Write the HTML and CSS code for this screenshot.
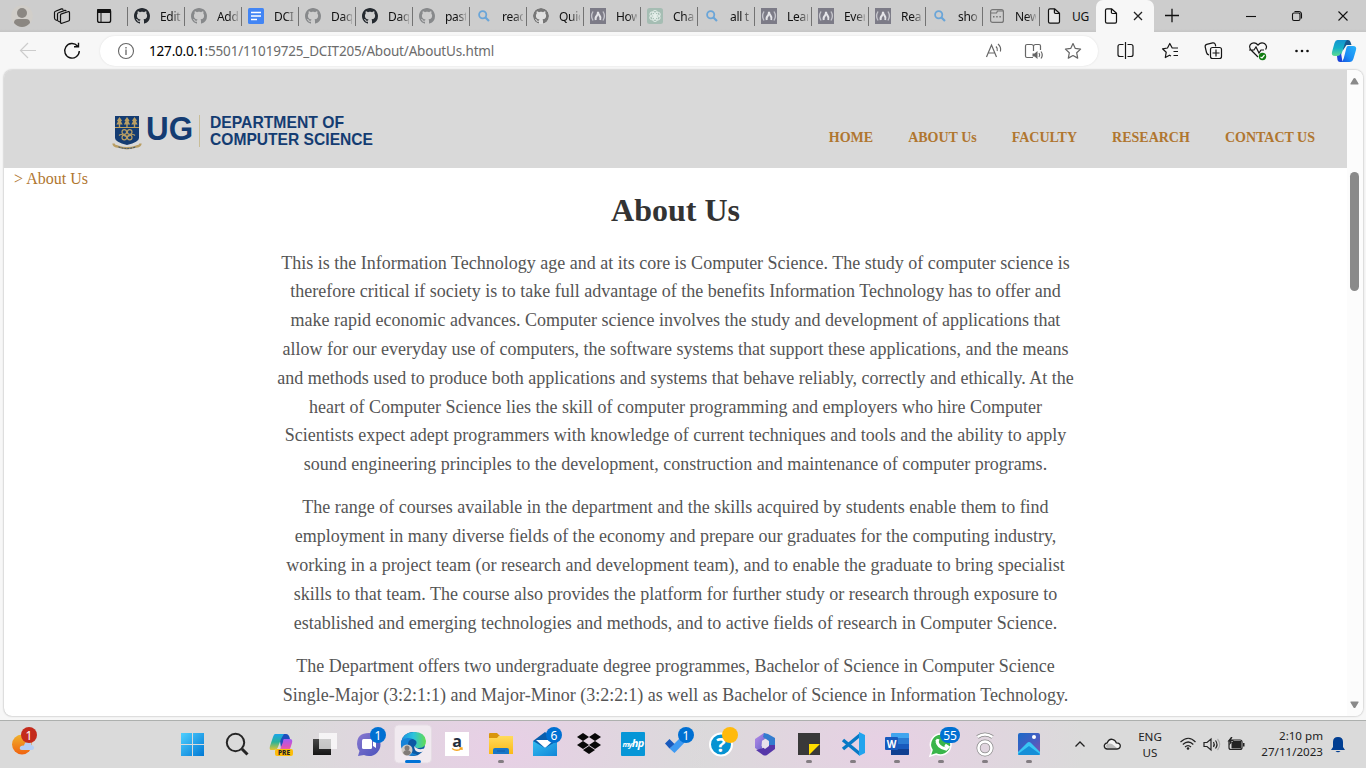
FILE: index.html
```html
<!DOCTYPE html>
<html lang="en">
<head>
<meta charset="utf-8">
<title>About Us</title>
<link rel="stylesheet" href="styles.css">
</head>
<body>
<svg class="defs" width="0" height="0" aria-hidden="true">
  <defs>
    <linearGradient id="win" x1="0" y1="0" x2="1" y2="1"><stop offset="0" stop-color="#4fd0ff"/><stop offset="1" stop-color="#0078d4"/></linearGradient>
    <linearGradient id="teal" x1="0" y1="0" x2="0" y2="1"><stop offset="0" stop-color="#1593cf"/><stop offset=".5" stop-color="#14b0c8"/><stop offset="1" stop-color="#5fdc90"/></linearGradient>
    <linearGradient id="blue" x1="1" y1="0" x2="0" y2="1"><stop offset="0" stop-color="#28b3fa"/><stop offset=".6" stop-color="#1a8cf5"/><stop offset="1" stop-color="#1552e0"/></linearGradient>
    <linearGradient id="rain" x1="0" y1="0" x2="0" y2="1"><stop offset="0" stop-color="#1ba5e8"/><stop offset=".5" stop-color="#29b39a"/><stop offset="1" stop-color="#e5c42f"/></linearGradient>
    <linearGradient id="pink" x1="0" y1="0" x2="0" y2="1"><stop offset="0" stop-color="#a15cf5"/><stop offset=".6" stop-color="#e053b8"/><stop offset="1" stop-color="#f77b8b"/></linearGradient>
    <linearGradient id="sun" x1="0" y1="0" x2="0" y2="1"><stop offset="0" stop-color="#f0b32e"/><stop offset="1" stop-color="#f0620f"/></linearGradient>
    <linearGradient id="dark" x1="0" y1="0" x2="0" y2="1"><stop offset="0" stop-color="#484848"/><stop offset="1" stop-color="#151515"/></linearGradient>
    <linearGradient id="chat" x1="0" y1="0" x2="1" y2="1"><stop offset="0" stop-color="#8878d0"/><stop offset="1" stop-color="#4b53bc"/></linearGradient>
    <linearGradient id="edge" x1="0" y1="0" x2="1" y2="0"><stop offset="0" stop-color="#1a8fe0"/><stop offset=".5" stop-color="#2cc3dc"/><stop offset="1" stop-color="#64dc50"/></linearGradient>
    <linearGradient id="fold" x1="0" y1="0" x2="0" y2="1"><stop offset="0" stop-color="#ffdb5c"/><stop offset="1" stop-color="#fbb917"/></linearGradient>
    <linearGradient id="mail" x1="0" y1="0" x2="1" y2="1"><stop offset="0" stop-color="#35bdf0"/><stop offset="1" stop-color="#1186d8"/></linearGradient>
    <linearGradient id="office" x1="0" y1="0" x2="1" y2="1"><stop offset="0" stop-color="#b98be8"/><stop offset="1" stop-color="#5a5fc8"/></linearGradient>
    <linearGradient id="photo" x1="0" y1="0" x2="1" y2="1"><stop offset="0" stop-color="#1a69c8"/><stop offset=".6" stop-color="#4a5cc0"/><stop offset="1" stop-color="#8750a8"/></linearGradient>
    <symbol id="gh" viewBox="0 0 16 16"><path fill="currentColor" d="M8 0C3.58 0 0 3.58 0 8c0 3.54 2.29 6.53 5.47 7.59.4.07.55-.17.55-.38 0-.19-.01-.82-.01-1.49-2.01.37-2.53-.49-2.69-.94-.09-.23-.48-.94-.82-1.13-.28-.15-.68-.52-.01-.53.63-.01 1.08.58 1.23.82.72 1.21 1.87.87 2.33.66.07-.52.28-.87.51-1.07-1.78-.2-3.64-.89-3.64-3.95 0-.87.31-1.59.82-2.15-.08-.2-.36-1.02.08-2.12 0 0 .67-.21 2.2.82.64-.18 1.32-.27 2-.27s1.36.09 2 .27c1.53-1.04 2.2-.82 2.2-.82.44 1.1.16 1.92.08 2.12.51.56.82 1.27.82 2.15 0 3.07-1.87 3.75-3.65 3.95.29.25.54.73.54 1.48 0 1.07-.01 1.93-.01 2.2 0 .21.15.46.55.38A8.01 8.01 0 0 0 16 8c0-4.42-3.58-8-8-8z"/></symbol>
    <symbol id="mag" viewBox="0 0 16 16"><g fill="none" stroke="#6aa5d8" stroke-width="1.8"><circle cx="6.700" cy="6.700" r="3.600"/><path d="M9.500 9.500L13 13" stroke-width="2.200"/></g></symbol>
    <symbol id="fcc" viewBox="0 0 16 16"><path fill="#7c7b87" d="M0 0h16v16H0z"/><path fill="none" stroke="#c4c4cb" stroke-width="1.400" d="M3 3.500Q.2 8 3 12.500M13 3.500Q15.800 8 13 12.500"/><path fill="none" stroke="#e4e4e8" stroke-width="2" d="M5.800 12Q5 9.500 7 7.500 8 6 8 3.800 8.200 6 9.500 7.500 11.200 9.500 10.200 12"/></symbol>
    <symbol id="doc" viewBox="0 0 16 16"><path fill="#f8f8f8" fill-opacity=".6" stroke="#111" stroke-width="1.200" stroke-linejoin="round" d="M4 .8h4.500l5 4.500v8.500q0 1.400-1.400 1.400H4Q2.500 15.200 2.500 13.800V2.200Q2.500.8 4 .8M8.400.8v3.500q0 1.200 1.200 1.200h3.900"/></symbol>
    <symbol id="gdoc" viewBox="0 0 16 16"><rect width="16" height="16" rx="1.500" fill="#4285f4"/><path stroke="#fff" stroke-width="1.500" d="M3 4.500h10M3 8h10M3 11.500h6"/></symbol>
    <symbol id="gpt" viewBox="0 0 16 16"><rect width="16" height="16" rx="2.500" fill="#a5bdb3"/><g fill="none" stroke="#e6efeb" stroke-width=".9"><ellipse cx="8" cy="5.600" rx="2.500" ry="3.200"/><ellipse cx="8" cy="5.600" rx="2.500" ry="3.200" transform="rotate(60 8 8)"/><ellipse cx="8" cy="5.600" rx="2.500" ry="3.200" transform="rotate(120 8 8)"/><ellipse cx="8" cy="5.600" rx="2.500" ry="3.200" transform="rotate(180 8 8)"/><ellipse cx="8" cy="5.600" rx="2.500" ry="3.200" transform="rotate(240 8 8)"/><ellipse cx="8" cy="5.600" rx="2.500" ry="3.200" transform="rotate(300 8 8)"/></g></symbol>
    <symbol id="newt" viewBox="0 0 16 16"><g fill="none" stroke="#757575" stroke-width="1.200"><rect x="1.600" y="1.600" width="12.800" height="12.800" rx="2"/><path d="M2 5h5.500l1-2h5.500"/></g><path fill="#757575" d="M4 8h1.500v1.500H4zM7.200 8h1.500v1.500H7.200zM10.400 8h1.500v1.500h-1.500z"/></symbol>
  </defs>
</svg>

<div class="tabstrip">
  <svg class="strip-icons" width="127" height="32">
    <circle cx="22" cy="16" r="10.800" fill="#d1cec9"/><circle cx="22" cy="13" r="5" fill="#8b8782"/><path fill="#8b8782" d="M14 23q0-4 4-4h8q4 0 4 4-3.500 4-8 4t-8-4z"/>
    <g fill="#cdcdcd" stroke="#111" stroke-width="1.200" stroke-linejoin="round"><path d="M57 20.500l-1.500-.7q-1-.5-1-2V12.500q0-1 1-1.300l6-2.300q1.200-.3 1.700.8"/><path d="M60 22l-1.500-.7q-1-.5-1-1.600V14q0-1 1-1.300l6.300-2.300q1-.2 1.400.8"/><path d="M60.500 15.200q0-1 1-1.300l6.500-2.200q1.500-.3 1.500 1v7q0 1-1 1.300l-6.500 2.200q-1.500.4-1.500-1z"/></g>
    <rect x="97.600" y="9.600" width="13" height="12.800" rx="2" fill="none" stroke="#111" stroke-width="1.300"/><path d="M97 9.500q0-.5 1-.5h12q1 0 1 1v3H97zM100.500 13h1v9h-1z" fill="#111"/>
  </svg>
  <div class="tab"><svg class="fav"><use href="#gh"/></svg><span>Edit</span></div>
  <div class="tab"><svg class="fav dim"><use href="#gh"/></svg><span>Add</span></div>
  <div class="tab"><svg class="fav"><use href="#gdoc"/></svg><span>DCI</span></div>
  <div class="tab"><svg class="fav dim"><use href="#gh"/></svg><span>Daq</span></div>
  <div class="tab"><svg class="fav"><use href="#gh"/></svg><span>Daq</span></div>
  <div class="tab"><svg class="fav dim"><use href="#gh"/></svg><span>past</span></div>
  <div class="tab"><svg class="fav"><use href="#mag"/></svg><span>reac</span></div>
  <div class="tab"><svg class="fav light"><use href="#gh"/></svg><span>Quic</span></div>
  <div class="tab"><svg class="fav"><use href="#fcc"/></svg><span>How</span></div>
  <div class="tab"><svg class="fav"><use href="#gpt"/></svg><span>Cha</span></div>
  <div class="tab"><svg class="fav"><use href="#mag"/></svg><span>all t</span></div>
  <div class="tab"><svg class="fav"><use href="#fcc"/></svg><span>Lear</span></div>
  <div class="tab"><svg class="fav"><use href="#fcc"/></svg><span>Ever</span></div>
  <div class="tab"><svg class="fav"><use href="#fcc"/></svg><span>Rea</span></div>
  <div class="tab"><svg class="fav"><use href="#mag"/></svg><span>sho</span></div>
  <div class="tab"><svg class="fav"><use href="#newt"/></svg><span>New</span></div>
  <div class="tab"><svg class="fav"><use href="#doc"/></svg><span class="full">UG</span></div>
  <div class="tab active"><svg class="fav"><use href="#doc"/></svg><svg width="10" height="10" stroke="#222" stroke-width="1.300"><path d="M1 1l8 8M9 1L1 9"/></svg></div>
  <svg class="window-controls" width="212" height="32" fill="none" stroke="#111" stroke-width="1.100">
    <path stroke-width="1.300" d="M11 15.500h14M18 8.800v13.500"/><path d="M92 16.500h10"/><rect x="138.500" y="13" width="7.500" height="7.500" rx="1.500"/><path d="M140.500 11.500h4q3 0 3 3v4"/><path d="M184.500 11.500l9 9M193.500 11.500l-9 9"/>
  </svg>
</div>

<div class="toolbar">
  <svg width="100" height="38" fill="none" stroke-width="1.200"><path stroke="#ccc" d="M36 18.500H20.500M28 11l-7.500 7.500L28 26"/><path stroke="#111" stroke-width="1.400" d="M77.500 14A7.300 7.300 0 1 0 79.300 19M78.500 10.800v4h-4.500"/></svg>
  <div class="address">
    <svg width="49" height="30" fill="none" stroke="#666"><circle cx="26" cy="15" r="7.500" stroke-width="1.100"/><path stroke-width="1.300" d="M26 13.500v5.500M26 11v1.500"/></svg>
    <div class="url"><b>127.0.0.1</b>:5501/11019725_DCIT205/About/AboutUs.html</div>
    <svg class="address-icons" width="122" height="30" fill="none" stroke="#666" stroke-width="1.200">
      <path d="M10.500 21L15.500 9l5 12M12.200 17h6.500M20 10.500q2 2 1.200 4.500M22 8q3.500 3 2.400 7.500"/>
      <path d="M57 21.500h-6q-1.500 0-1.500-1.500V10q0-1.500 1.500-1.500h4.500q1.500 0 2 1.500v5M57.500 10q.5-1.500 2-1.500H63q1.500 0 1.500 1.500v4"/><path fill="#666" stroke="none" d="M56.500 17.500h2l3-2.500v8l-3-2.500h-2z"/><path d="M63 17q1.500 2 0 4M65 15.500q2.500 3.500 0 7"/>
      <path stroke-linejoin="round" d="M97 7.500l2.300 4.900 5.300.7-3.900 3.700 1 5.300-4.700-2.600-4.700 2.600 1-5.300-3.900-3.700 5.300-.7z"/>
    </svg>
  </div>
  <svg width="268" height="38" fill="none" stroke="#161616" stroke-width="1.200">
    <path d="M25.500 12.500H22q-2 0-2 2v8q0 2 2 2h3.500M29.500 12.500H33q2 0 2 2v8q0 2-2 2h-3.500M27.500 10v17"/>
    <path stroke-linejoin="round" d="M73 24l-1.500-.8L67.300 25.500l.9-5.200-3.700-3.500 5-.8L71.800 11.500l2.400 4.500H80M75.500 19.500H80M75.500 23.500H80"/>
    <path d="M111 23q-2-.5-2.500-2.500l-1.300-5.500q-.4-2 1.500-2.600l6-1.500q2-.4 2.600 1.500l.4 2"/><rect x="112.500" y="15.500" width="11" height="11" rx="2"/><path d="M118 17.500v7M114.500 21h7"/>
    <path d="M160 25l-7-7q-3-4 .5-6.500 3.500-2 6.500 1.500 3-3.500 6.500-1.500 3.500 3 1 6M151 18h5l2-3 3 6 2-3h3"/><circle cx="164.500" cy="24.500" r="3.700" fill="#107c10" stroke="none"/><path stroke="#fff" d="M162.500 25l1.500 1 2.500-3"/>
    <g fill="#111" stroke="none"><circle cx="198.500" cy="19" r="1.300"/><circle cx="204" cy="19" r="1.300"/><circle cx="209.500" cy="19" r="1.300"/></g>
    <g stroke="none"><path fill="#15588f" d="M246 8h4q2 0 2.500 2l1 3h-5l-4 6z"/><path fill="url(#teal)" d="M239.500 8H249q-1.500 1-2.200 3.500l-2.600 8.500q-1 4-4 4H237q-4 0-3-4l2.500-9q1-3 3-3z"/><path fill="#1b45d8" d="M239 24q3 0 4-3l1.500 9H242q-2 0-2.500-2z"/><path fill="url(#blue)" d="M250 14h5q4 0 3 4l-2.500 8.500q-1 3.500-4 3.500H243q2-1 2.700-3.500l2.300-9q.6-3.500 2-3.500z"/></g>
  </svg>
</div>

<div class="viewport">
  <div class="site">
    <header class="site-header">
      <svg class="logo" width="264" height="44" viewBox="0 0 264 44">
        <path fill="#143c72" d="M3 4h24v22q0 4-12 7-12-3-12-7z"/><path stroke="#c2a35e" stroke-width="1" d="M3 15.500h24"/>
        <g fill="#b99e63"><path d="M7.500 5l2.500 3.500-1 1 1.700 3H8.200v2.500H6.800v-2.500H4.300l1.700-3-1-1zM15 5l2.500 3.500-1 1 1.700 3h-2.500v2.500h-1.400v-2.500h-2.500l1.700-3-1-1zM22.500 5L25 8.500l-1 1 1.700 3h-2.500v2.500h-1.400v-2.500h-2.500l1.700-3-1-1z"/></g>
        <g fill="none" stroke="#b99e63" stroke-width="1.200"><circle cx="12.300" cy="20" r="2.300"/><circle cx="17.700" cy="20" r="2.300"/><circle cx="12.300" cy="25.500" r="2.300"/><circle cx="17.700" cy="25.500" r="2.300"/><path d="M7 23.500q2-2 5 0t6 0 5 0"/><path stroke-width="2.300" d="M1.500 31.500q0 2.500 4 3 9.500 3.500 19 0 4-.5 4-3"/></g>
        <path fill="none" stroke="#26466f" stroke-dasharray="2 1" d="M6.500 35q8.500 3 17 0"/>
        <path stroke="#c8bd98" d="M87.500 3v32"/>
        <g class="wordmark"><text x="34" y="28" font-size="34" textLength="47" lengthAdjust="spacingAndGlyphs">UG</text><text x="98" y="16" font-size="16.500" textLength="134" lengthAdjust="spacingAndGlyphs">DEPARTMENT OF</text><text x="98" y="33" font-size="16.500" textLength="163" lengthAdjust="spacingAndGlyphs">COMPUTER SCIENCE</text></g>
      </svg>
      <nav><a>HOME</a><a>ABOUT Us</a><a>FACULTY</a><a>RESEARCH</a><a>CONTACT US</a></nav>
    </header>
    <div class="crumb">&gt; About Us</div>
    <main>
      <h1>About Us</h1>
      <p>This is the Information Technology age and at its core is Computer Science. The study of computer science is<br>therefore critical if society is to take full advantage of the benefits Information Technology has to offer and<br>make rapid economic advances. Computer science involves the study and development of applications that<br>allow for our everyday use of computers, the software systems that support these applications, and the means<br>and methods used to produce both applications and systems that behave reliably, correctly and ethically. At the<br>heart of Computer Science lies the skill of computer programming and employers who hire Computer<br>Scientists expect adept programmers with knowledge of current techniques and tools and the ability to apply<br>sound engineering principles to the development, construction and maintenance of computer programs.</p>
      <p>The range of courses available in the department and the skills acquired by students enable them to find<br>employment in many diverse fields of the economy and prepare our graduates for the computing industry,<br>working in a project team (or research and development team), and to enable the graduate to bring specialist<br>skills to that team. The course also provides the platform for further study or research through exposure to<br>established and emerging technologies and methods, and to active fields of research in Computer Science.</p>
      <p>The Department offers two undergraduate degree programmes, Bachelor of Science in Computer Science<br>Single-Major (3:2:1:1) and Major-Minor (3:2:2:1) as well as Bachelor of Science in Information Technology.</p>
    </main>
  </div>
  <div class="scrollbar">
    <svg width="15" height="20"><path fill="#8a8a8a" d="M7.500 8q.7 0 1 .6l3 5q.4 1-.6 1H4q-1 0-.5-1l3-5q.4-.6 1-.6z"/></svg>
    <div class="thumb"></div>
    <svg width="15" height="20"><path fill="#8a8a8a" d="M7.500 15q-.6 0-1-.6l-3-4.800Q3 8.600 4 8.600h7q1 0 .5 1l-3 4.800q-.4.600-1 .6z"/></svg>
  </div>
</div>

<footer class="taskbar">
  <svg class="weather" width="171" height="47"><circle cx="22" cy="23.500" r="10" fill="url(#sun)"/><path fill="#b5cff5" d="M22 29q-3 0-2-3 1-2 4-1.500 1-5 5-3.500 3 0 2.500 3 3 1 2.500 3.500-.5 1.500-3 1.500z"/><circle cx="29" cy="14" r="8" fill="#c42b1c"/><text x="29" y="18.500" class="badge">1</text></svg>
  <div class="apps">
    <svg><path fill="url(#win)" d="M10 12h11v11H10zM22 12h11v11H22zM10 24h11v11H10zM22 24h11v11H22z"/></svg>
    <svg fill="none" stroke="#252525"><circle cx="20.500" cy="21.500" r="8.700" stroke-width="2"/><path stroke-width="3" d="M27 28l5.500 5.500"/></svg>
    <svg><g transform="translate(-1 0)"><path fill="#1d4fbd" d="M21 13h7q3 0 4 5l-5 1-4 8z"/><path fill="url(#rain)" d="M17 13h9l-3 5-3 8q-1 3-4 3h-3q-2 0-1-4l3-9q1-3 2-3z"/><path fill="url(#pink)" d="M26 18h6q3 0 2 4l-2 6q-1 3-3 3h-8l4-10q0-3 1-3z"/><rect x="17" y="28" width="18" height="7" rx="2" fill="#fdbd0b"/><text x="26" y="34" class="pre">PRE</text></g></svg>
    <svg><path fill="url(#dark)" d="M10 18h18v16H10z"/><path fill="#fff" fill-opacity=".72" d="M16 12h18v16H16z"/></svg>
    <svg><path fill="url(#chat)" d="M22 12a11.500 11.500 0 0 1 0 23q-3 0-5-1l-6 1 1.500-5Q10 27 10 23q0-11 12-11z"/><rect x="15" y="18" width="10" height="10" rx="1.500" fill="#fff"/><path fill="#fff" d="M26 21l3-2v8l-3-2z"/><circle cx="31" cy="14" r="8" fill="#0070d2"/><text x="31" y="18.500" class="badge">1</text></svg>
    <svg><rect x="3.500" y="4" width="37" height="38" rx="4" fill="#f1eaf0" stroke="#e5dce4"/><circle cx="22" cy="23" r="12" fill="#0c59a4"/><path fill="url(#edge)" d="M10 22Q12 11 23 11t12 9q0 7-7 7-4 0-4-2 4-5-2-7-6-1-12 4z"/><path fill="#1683d8" d="M10 20q5-5 11-2-5 1-4 9 2 6 9 6-5 4-11-1Q9 28 10 20z"/><path fill="#f1eaf0" d="M23 25q4 5 12 2l-2 3q-9 4-10-5z"/><circle cx="16" cy="29" r="5.500" fill="#d0ccc8"/><circle cx="16" cy="27" r="2.500" fill="#817c78"/><path fill="#817c78" d="M12 32q1-3 4-3t4 3q-4 5-8 0z"/><rect x="14" y="39" width="16" height="3" rx="1.500" fill="#0072d6"/></svg>
    <svg><path fill="#fff" d="M10 11h24v24H10z"/><text x="22" y="26" class="amazon">a</text><path fill="none" stroke="#f5a623" stroke-width="1.300" d="M17 27.500q5 3.500 9.500 0M24.500 27h2.500v2"/></svg>
    <svg><path fill="#d9960c" d="M10 13q0-1 1-1h7l3 3h-1l-2 3h-8z"/><path fill="url(#fold)" d="M10 17h8l2-2h14v18H10z"/><path fill="#1876c8" d="M14 33v-4q0-2 2-2h12q2 0 2 2v4z"/><path stroke="#125ba8" d="M18 30h8"/><rect class="run" x="19" y="39" width="6" height="3" rx="1.500"/></svg>
    <svg><path fill="#0a5ead" d="M10 20l12-9 12 9v9H10z"/><path fill="#fff" d="M13 19h18l-9 8z"/><path fill="url(#mail)" d="M10 20l12 7 12-7v15H10z"/><circle cx="31" cy="14" r="8" fill="#0070d2"/><text x="31" y="18.500" class="badge">6</text></svg>
    <svg><path fill="#080808" d="M16 12l6 4-6 4-6-4zM28 12l6 4-6 4-6-4zM16 20l6 4-6 4-6-4zM28 20l6 4-6 4-6-4zM22 25l6 4-6 4-6-4z"/></svg>
    <svg><rect x="10" y="11" width="24" height="24" rx="1" fill="#0696d7"/><text x="22" y="26" class="hp"><tspan>my</tspan><tspan class="hp-big">hp</tspan></text></svg>
    <svg><path fill="#3e9af2" d="M14.500 27.500L29 13l4.500 4.500L19.500 32z"/><path fill="#185abd" d="M10 22.500l4.500-4.500 5 5-5 4.500z"/><circle cx="31" cy="14" r="8" fill="#0070d2"/><text x="31" y="18.500" class="badge">1</text></svg>
    <svg><circle cx="22" cy="23.500" r="11" fill="#0693d2" stroke="#fff" stroke-width="2"/><text x="22" y="31" class="help">?</text><circle cx="31" cy="14" r="8" fill="#ffba0d"/></svg>
    <svg><path fill="url(#office)" d="M12 18l9-6 4 4-6 4v7l-2 3-5-3z"/><path fill="#337ccf" d="M21 12l4 1 7 4v11l-6-3v-5l-6-4z"/><path fill="#5637a9" d="M32 24v4l-8 6q-2 1-4 0l-7-5 7-2 6-3z"/><path fill="#e8e2eb" d="M19 20l3.500-2 3.500 3v4l-4 3-3.500-3z"/></svg>
    <svg><path fill="#393939" d="M11 12h22v22H11z"/><path fill="#ffdd00" d="M22 23h11L22 34z"/><rect class="run" x="19" y="39" width="6" height="3" rx="1.500"/></svg>
    <svg><path fill="none" stroke="#0879c5" stroke-width="3.500" stroke-linejoin="round" d="M29 14L12 28M12 19l17 14"/><path fill="#22a4ee" d="M28 11l6 3v18l-6 3z"/><rect class="run" x="19" y="39" width="6" height="3" rx="1.500"/></svg>
    <svg><rect x="16" y="12" width="18" height="22" rx="1" fill="#41a5ee"/><path fill="#2b7cd3" d="M16 17h18v6H16z"/><path fill="#185abd" d="M16 23h18v5H16z"/><path fill="#103f91" d="M16 28h18v5q0 1-1 1H16z"/><rect x="10" y="16" width="13" height="13" rx="1" fill="#185abd"/><text x="16.500" y="26.500" class="word">W</text><rect class="run" x="19" y="39" width="6" height="3" rx="1.500"/></svg>
    <svg><path fill="#3ab54a" stroke="#fff" stroke-width="1.500" d="M22 13a10.500 10.500 0 1 1-5 20l-6 2 2-6A10.500 10.500 0 0 1 22 13z"/><path fill="none" stroke="#fff" stroke-width="3" d="M18 19q0 7 9 9l2-2-3-2M18 22l1-4"/><rect x="21" y="6" width="20" height="16" rx="8" fill="#0070d2"/><text x="31" y="18.500" class="badge">55</text><rect class="run" x="19" y="39" width="6" height="3" rx="1.500"/></svg>
    <svg fill="none"><g stroke="#888" stroke-width="4"><circle cx="22" cy="27" r="6.500"/><path d="M14.500 16q7.500-5 15 0"/></g><g stroke="#fff" stroke-width="2.600"><circle cx="22" cy="27" r="6.500"/><path d="M14.500 16q7.500-5 15 0"/></g><rect class="run" x="19" y="39" width="6" height="3" rx="1.500"/></svg>
    <svg><rect x="11" y="12" width="22" height="22" rx="2" fill="url(#photo)"/><path fill="#38c6f4" d="M11 31l9-9q2-2 4 0l9 9v2q0 1-1 1H12q-1 0-1-1z"/><path fill="#168fd8" d="M11 33l11-8 11 8-1 1H12z"/><circle cx="27" cy="16" r="2" fill="#fff"/><rect class="run" x="19" y="39" width="6" height="3" rx="1.500"/></svg>
  </div>
  <div class="tray">
    <svg width="77" height="47" fill="none" stroke="#222" stroke-width="1.300"><path d="M24.500 25.500l4.500-4.500 4.500 4.500"/><path d="M56 28q-3-.5-2.700-3.500.5-2.500 3-2.700 1.500-4 5-3.500 3 .5 4 3.500 4 .2 4 3 0 3-3.300 3.200z" fill="#f3f3f3"/><path fill="#bbb" stroke="none" d="M56 27q-2-2 0-4 3-1 5 0l5 4z"/></svg>
    <div class="lang">ENG<br>US</div>
    <svg width="80" height="47" fill="none" stroke="#222" stroke-width="1.200"><path d="M8.500 21q8-7.500 15 0M10.800 23.500q5.500-5 10.500 0M13 26q3-3 6 0"/><circle cx="16" cy="27.500" r="1.300" fill="#222" stroke="none"/><path d="M32 21.500h3l4-3.500v11l-4-3.500h-3zM41.500 21q1.500 2.500 0 5M43.500 19.500q3 4 0 8"/><path stroke="#aaa" d="M45.500 18q4.500 5.500 0 11"/><rect x="57" y="19" width="13" height="9.500" rx="2"/><path fill="#222" stroke="none" d="M59.500 20H69v7.500h-9.500zM71 22h1.500v3.500H71zM59 16l-3.500 4.500h2.500l-1 4 5-5.500h-3l1.500-3z"/></svg>
    <div class="clock">2:10 pm<br>27/11/2023</div>
    <svg width="43" height="47"><path fill="#003e92" d="M15 16q5 0 5 5v5l2 3H8l2-3v-5q0-5 5-5zM12.500 30h5q-2.500 2.500-5 0z"/></svg>
  </div>
</footer>
</body>
</html>
```
FILE: styles.css
```css
* { box-sizing: border-box; }
body { margin: 0; width: 1366px; height: 768px; overflow: hidden; display: flex; flex-direction: column; background: #f7f7f7; font-family: "Noto Sans", "Open Sans", sans-serif; color: #111; }
svg { display: block; flex: none; }
.defs { position: absolute; }
.tabstrip { height: 32px; display: flex; background: linear-gradient(#cdcdcd 29px, #c5c5c5); flex: none; }
.tab { width: 57px; height: 32px; flex: none; display: flex; align-items: center; padding-left: 7px; font-size: 12px; background: linear-gradient(#737373, #737373) 0 7px / 1px 19px no-repeat; }
.tab span { width: 21px; margin-left: 10px; overflow: hidden; white-space: nowrap; letter-spacing: -.3px; -webkit-mask-image: linear-gradient(90deg, #000 55%, rgba(0, 0, 0, .2)); mask-image: linear-gradient(90deg, #000 55%, rgba(0, 0, 0, .2)); }
.tab .full { -webkit-mask-image: none; mask-image: none; }
.fav { width: 16px; height: 16px; color: #24292f; }
.fav.dim { color: #87898b; }
.fav.light { color: #777; background: #e0e0e0; border-radius: 50%; }
.tab.active { width: 58px; background: #f7f7f7; border-radius: 7px 7px 0 0; gap: 14px; }
.toolbar { height: 38px; flex: none; display: flex; }
.address { width: 998px; height: 30px; margin-top: 4px; border-radius: 15px; background: #fff; box-shadow: 0 0 2px #ddd; display: flex; }
.url { padding-top: 1px; line-height: 29px; font-size: 13.5px; color: #6c6c6c; letter-spacing: -.18px; white-space: nowrap; }
.url b { font-weight: 400; color: #000; }
.address-icons { margin-left: auto; }
.viewport { width: 1359px; height: 646px; margin-left: 4px; flex: none; display: flex; border-radius: 8px; overflow: hidden; background: #fff; box-shadow: 0 0 2px #999; }
.site { width: 1343px; font-family: "Liberation Serif", "Times New Roman", serif; }
.site-header { height: 98px; background: #d9d9d9; display: flex; justify-content: space-between; padding: 42px 32px 0 108px; }
.wordmark { font-family: "Liberation Sans", Arial, sans-serif; font-weight: bold; fill: #143c72; }
.site-header nav { display: flex; gap: 35px; padding-top: 17px; font-size: 14px; line-height: 17px; font-weight: bold; color: #b0762f; }
.crumb { padding: 2px 10px 1px; font-size: 16px; line-height: 18px; color: #b0762f; }
main { text-align: center; color: #555; }
h1 { margin: 2px 0 19.7px; font-size: 32px; line-height: 38px; color: #333; }
p { margin: 0 0 14.4px; font-size: 18px; line-height: 28.8px; white-space: nowrap; }
.scrollbar { width: 16px; background: #fcfcfc; display: flex; flex-direction: column; }
.thumb { width: 9px; height: 119px; margin: 82px 0 0 3px; border-radius: 5px; background: #8a8a8a; }
.scrollbar svg:last-child { margin-top: auto; margin-bottom: 3px; }
.taskbar { margin-top: 4px; height: 48px; flex: none; display: flex; border-top: 1px solid #adb0ae; background: radial-gradient(ellipse 210px 120px at 500px 24px, #e8cfe6, transparent), radial-gradient(ellipse 200px 110px at 885px 24px, #e7d0e4, transparent), #dadada; }
.apps { width: 880px; flex: none; display: flex; }
.apps svg { width: 44px; height: 47px; }
.badge { font: 12px "Noto Sans", sans-serif; fill: #fff; stroke: none; text-anchor: middle; }
.pre { font: 800 6.5px "Noto Sans", sans-serif; text-anchor: middle; fill: #222; }
.amazon { font: bold 16px "Open Sans", sans-serif; text-anchor: middle; fill: #232f3e; }
.hp { font: italic bold 7.5px "Open Sans", sans-serif; text-anchor: middle; fill: #fff; letter-spacing: -.7px; }
.hp-big { font-size: 11px; }
.help { font: bold 20px "Open Sans", sans-serif; text-anchor: middle; fill: #fff; }
.word { font: bold 10px "Open Sans", sans-serif; text-anchor: middle; fill: #fff; }
.run { fill: #837d82; stroke: none; }
.tray { display: flex; font-size: 11.6px; line-height: 16px; color: #222; }
.lang { width: 44px; padding-top: 8px; text-align: center; }
.clock { width: 71px; padding-top: 7px; text-align: right; white-space: nowrap; }
```
